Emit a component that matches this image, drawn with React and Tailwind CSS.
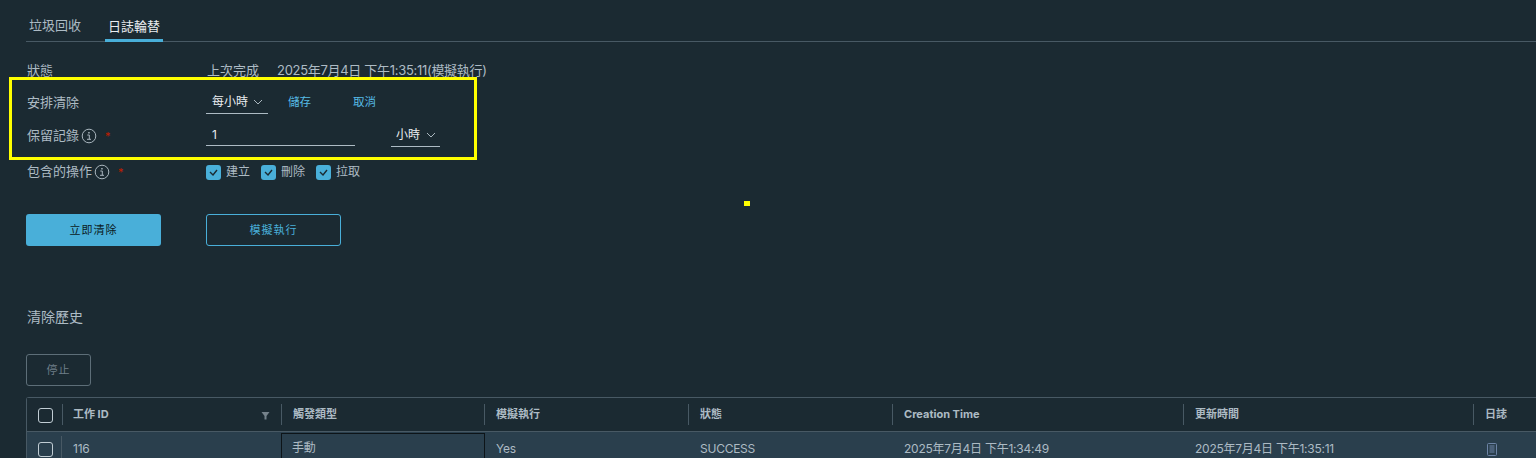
import React from 'react';

const font = { fontFamily: '"Inter", "Noto Sans CJK TC", sans-serif' };

const Info = () => (
    <svg width="16" height="16" viewBox="0 0 16 16" fill="none" className="shrink-0 text-[#a9b6be]">
        <circle cx="8" cy="8" r="6.8" stroke="currentColor" strokeWidth="1" />
        <path d="M6.3 7h2v4.2M6 11.3h4" stroke="currentColor" strokeWidth="1" />
        <rect x="7.2" y="4" width="1.5" height="1.5" fill="currentColor" />
    </svg>
);

const Chevron = () => (
    <svg width="10" height="6" viewBox="0 0 10 6" fill="none" className="text-[#a9b6be]">
        <path d="M1 1l4 4 4-4" stroke="currentColor" strokeWidth="1" />
    </svg>
);

const Check = ({ label }) => (
    <div className="flex items-center gap-[5px]">
        <span className="w-[15px] h-[15px] rounded-[3px] bg-[#49afd9] flex items-center justify-center">
            <svg width="9" height="7" viewBox="0 0 9 7" fill="none">
                <path d="M1 3l3 3 4-5" stroke="#1b2a32" strokeWidth="1.4" />
            </svg>
        </span>
        <span className="text-[12px] text-[#adbbc4]">{label}</span>
    </div>
);

const FormRow = ({ label, info, required, className, children }) => (
    <div className={`flex items-center ${className}`}>
        <div className="w-[180px] shrink-0 pl-px flex items-center text-[13px] text-[#adbbc4]">
            <span>{label}</span>
            {info && <span className="ml-[2px]"><Info /></span>}
            {required && <span className="ml-[8px] text-[#c21d00] text-[11px]">*</span>}
        </div>
        {children}
    </div>
);

const Select = ({ label, className }) => (
    <div className={`h-[23px] self-start border-b border-[#adbbc4] flex items-center justify-between text-[12px] text-[#eaedf0] ${className}`}>
        <span>{label}</span>
        <Chevron />
    </div>
);

const Box = () => <span className="block w-[15px] h-[15px] rounded-[3px] border border-[#c1cdd4]" />;

const columns = [
    { title: '觸發類型', width: 'w-[203px]' },
    { title: '模擬執行', width: 'w-[204px]' },
    { title: '狀態', width: 'w-[204px]' },
    { title: 'Creation Time', width: 'w-[291px]' },
    { title: '更新時間', width: 'w-[290px]' },
    { title: '日誌', width: 'w-[70px]' },
];

export default function App() {
    return (
        <div style={font} className="relative w-[1536px] h-[458px] overflow-hidden bg-[#1b2a32] pl-[26px]">
            {/* Tabs */}
            <div className="flex h-[42px] border-b border-[#485964] items-end text-[13px]">
                <div className="w-[79px] pl-[3px] h-[41px] pt-[16px] text-[#adbbc4]">垃圾回收</div>
                <div className="w-[58px] h-[41px] pt-[16px] text-center text-[#eaedf0] border-b-[3px] border-[#49afd9] -mb-px">日誌輪替</div>
            </div>

            {/* Form */}
            <FormRow label="狀態" className="mt-[19px] h-[20px]">
                <span className="ml-px text-[13px] text-[#adbbc4] w-[70px]">上次完成</span>
                <span className="text-[13px] text-[#adbbc4] tracking-[-0.3px]">2025年7月4日 下午1:35:11(模擬執行)</span>
            </FormRow>
            <FormRow label="安排清除" className="mt-[10px] h-[24px]">
                <Select label="每小時" className="w-[62px] pl-[6px] pr-[5px]" />
                <span className="ml-[20px] text-[11.5px] text-[#57bce6]">儲存</span>
                <span className="ml-[42px] text-[11.5px] text-[#57bce6]">取消</span>
            </FormRow>
            <FormRow label="保留記錄" info required className="mt-[9px] h-[24px]">
                <div className="w-[149px] h-[22px] self-start border-b border-[#adbbc4] pl-[6px] flex items-center text-[12px] text-[#eaedf0]">1</div>
                <Select label="小時" className="ml-[36px] w-[49px] pl-[5px] pr-[4px]" />
            </FormRow>
            <FormRow label="包含的操作" info required className="mt-[12px] h-[24px]">
                <div className="flex gap-[11px]">
                    <Check label="建立" />
                    <Check label="刪除" />
                    <Check label="拉取" />
                </div>
            </FormRow>

            {/* Actions */}
            <div className="mt-[30px] flex gap-[45px] text-[11px]">
                <button className="w-[135px] h-[32px] rounded-[3px] bg-[#49afd9] text-[#0b1a22] tracking-[1px]">立即清除</button>
                <button className="w-[135px] h-[32px] rounded-[3px] border border-[#49afd9] text-[#49afd9] tracking-[1px]">模擬執行</button>
            </div>

            {/* History */}
            <h2 className="mt-[61px] pl-px h-[20px] leading-[20px] text-[14px] text-[#adbbc4]">清除歷史</h2>
            <button className="mt-[27px] block w-[65px] h-[32px] rounded-[3px] border border-[#5d6e78] text-[11px] text-[#6f7f89] tracking-[1px]">停止</button>

            {/* Table */}
            <div className="mt-[11px] w-[1560px] rounded-tl-[3px] border-t border-l border-[#485964]">
                <div className="flex h-[34px] bg-[#1b2a32] border-b border-[#485964] text-[11px] font-bold text-[#adbbc4]">
                    <div className="w-[35px] shrink-0 flex items-center pl-[11px] relative top-px"><Box /></div>
                    <div className="w-[219px] shrink-0 my-[6px] border-l border-[#485964] pl-[10px] pr-[11px] flex items-center justify-between">
                        <span>工作 ID</span>
                        <svg width="9" height="9" viewBox="0 0 9 9" className="mt-[2px]">
                            <path d="M0.5 1h8L5.5 5v3.5h-2V5z" fill="#75828b" />
                        </svg>
                    </div>
                    {columns.map((c) => (
                        <div key={c.title} className={`${c.width} shrink-0 my-[6px] border-l border-[#485964] pl-[11px] flex items-center`}>
                            {c.title}
                        </div>
                    ))}
                </div>
                <div className="flex h-[30px] bg-[#2a3f4d] text-[12px] text-[#adbbc4] tracking-[-0.25px]">
                    <div className="w-[34px] shrink-0 flex items-center pl-[11px] relative top-[2px]"><Box /></div>
                    <div className="w-[220px] shrink-0 mt-[4px] border-l border-[#485964] pl-[11px] flex items-center">116</div>
                    <div className="w-[204px] -mr-px shrink-0 mt-[1px] border border-b-0 border-[#0d1418] pl-[10px] flex items-center relative z-10">手動</div>
                    <div className="w-[204px] shrink-0 mt-[3px] pl-[12px] flex items-center">Yes</div>
                    <div className="w-[204px] shrink-0 mt-[3px] pl-[12px] flex items-center">SUCCESS</div>
                    <div className="w-[291px] shrink-0 mt-[3px] pl-[12px] flex items-center">2025年7月4日 下午1:34:49</div>
                    <div className="w-[290px] shrink-0 mt-[3px] pl-[12px] flex items-center">2025年7月4日 下午1:35:11</div>
                    <div className="w-[70px] shrink-0 mt-[3px] pl-[14px] flex items-center">
                        <svg width="10" height="13" viewBox="0 0 10 13" fill="none" className="mt-[2px]">
                            <rect x="0.5" y="0.5" width="9" height="12" rx="1" stroke="#6d84a6" />
                            <path d="M2.5 3h5M2.5 5h5M2.5 7h5M2.5 9h5" stroke="#6d84a6" />
                        </svg>
                    </div>
                </div>
            </div>

            {/* Yellow annotation marks drawn over the screenshot */}
            <div className="absolute left-[9px] top-[77px] w-[468px] h-[83px] border-[3px] border-[#ffff00]" />
            <div className="absolute left-[744px] top-[201px] w-[6px] h-[5px] bg-[#ffff00]" />
        </div>
    );
}
